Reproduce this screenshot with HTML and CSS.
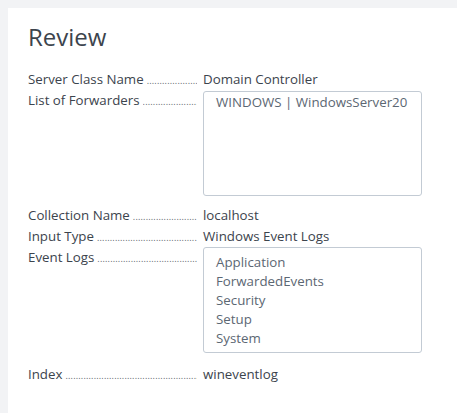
FILE: index.html
```html
<!DOCTYPE html>
<html>
<head>
<meta charset="utf-8">
<link rel="stylesheet" href="styles.css">
</head>
<body>
<div class="panel">
  <h1 class="title">Review</h1>
  <div class="rows">
    <div class="row">
      <div class="label"><span class="name">Server Class Name</span><span class="dots"></span></div>
      <div class="value">Domain Controller</div>
    </div>
    <div class="row row-box row-fwd">
      <div class="label"><span class="name">List of Forwarders</span><span class="dots"></span></div>
      <div class="box box-fwd"><div class="item">WINDOWS | WindowsServer20</div></div>
    </div>
    <div class="row">
      <div class="label"><span class="name">Collection Name</span><span class="dots"></span></div>
      <div class="value">localhost</div>
    </div>
    <div class="row">
      <div class="label"><span class="name">Input Type</span><span class="dots"></span></div>
      <div class="value">Windows Event Logs</div>
    </div>
    <div class="row row-box">
      <div class="label"><span class="name">Event Logs</span><span class="dots"></span></div>
      <div class="box box-logs">
        <div class="item">Application</div>
        <div class="item">ForwardedEvents</div>
        <div class="item">Security</div>
        <div class="item">Setup</div>
        <div class="item">System</div>
      </div>
    </div>
    <div class="row">
      <div class="label"><span class="name">Index</span><span class="dots"></span></div>
      <div class="value">wineventlog</div>
    </div>
  </div>
</div>
</body>
</html>
```
FILE: styles.css
```css
html, body {
  margin: 0;
  padding: 0;
  background: #f2f3f5;
  height: 100%;
}
body {
  padding: 8px 0 0 8px;
  box-sizing: border-box;
  font-family: "Open Sans", "Liberation Sans", sans-serif;
  color: #3c444d;
  overflow: hidden;
}
.panel {
  background: #ffffff;
  height: 100%;
  padding: 14px 20px 0 20px;
  box-sizing: border-box;
}
.title {
  margin: 0;
  font-size: 24px;
  font-weight: 400;
  line-height: 30px;
  color: #3c444d;
}
.rows {
  margin-top: 17px;
  display: flex;
  flex-direction: column;
}
.row {
  display: flex;
  align-items: flex-start;
  font-size: 13.3px;
  line-height: 21px;
}
.row-box {
  margin-bottom: 11px;
}
.row-fwd {
  margin-bottom: 9px;
}
.label {
  width: 169px;
  height: 21px;
  display: flex;
  overflow: hidden;
  white-space: nowrap;
  margin-right: 6px;
}
.name {
  flex: none;
  padding-right: 3px;
}
.dots {
  flex: 1;
  overflow: hidden;
  height: 21px;
  line-height: 21px;
}
.dots::after {
  content: "........................................................................................";
  font-size: 9px;
  letter-spacing: 0.2px;
  color: #5a626b;
}
.value {
  white-space: nowrap;
}
.box {
  width: 219px;
  box-sizing: border-box;
  border: 1px solid #c3cbd4;
  border-radius: 3px;
  padding: 0 12px;
  color: #5c6773;
  line-height: 19px;
}
.box-fwd {
  height: 105px;
  margin-top: 1px;
  padding-top: 1px;
}
.box-logs {
  height: 106px;
  padding-top: 5px;
}
```
